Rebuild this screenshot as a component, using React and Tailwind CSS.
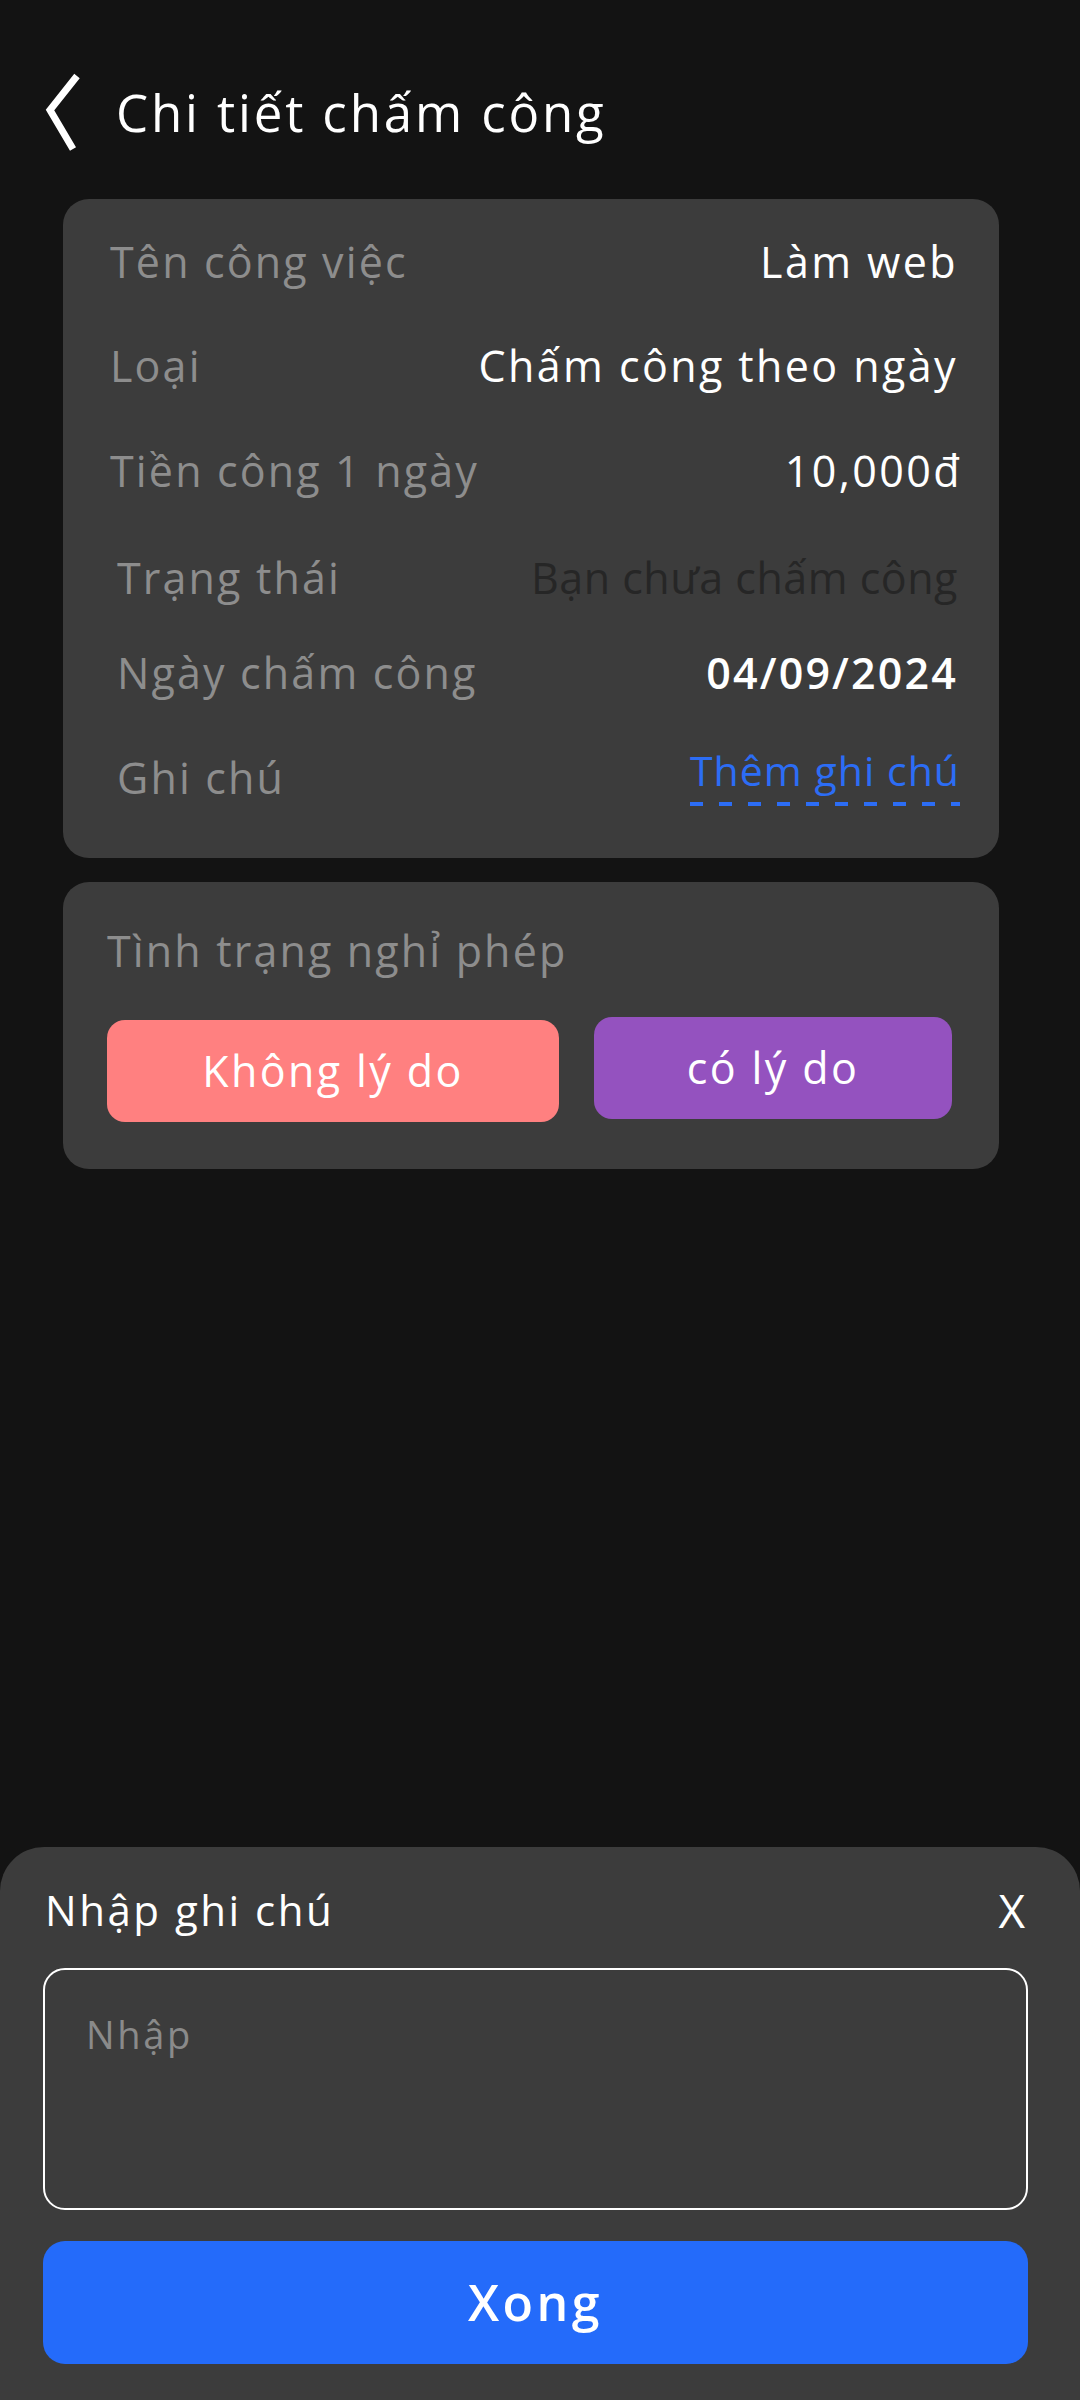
export default function App() {
  const label = "text-[43px] leading-[60px] tracking-[0.05em] text-[#8d8d8d]";
  const value = "text-[43px] leading-[60px] tracking-[0.056em] text-white font-medium";
  return (
    <div className="h-[2400px] w-[1080px] bg-[#131313] flex flex-col font-['Open_Sans','Noto_Sans',sans-serif] overflow-hidden">
      {/* Header */}
      <div className="flex items-center pt-[72px] pl-[45px]">
        <svg width="36" height="80" viewBox="0 0 36 80" className="shrink-0">
          <polyline points="32,4 5,38 28,77" fill="none" stroke="white" strokeWidth="7" strokeLinejoin="miter" />
        </svg>
        <div className="ml-[35px] text-[51px] leading-[70px] tracking-[0.056em] text-white">Chi tiết chấm công</div>
      </div>

      {/* Card 1 */}
      <div className="ml-[63px] mt-[47px] w-[936px] h-[659px] rounded-[26px] bg-[#3c3c3c] flex flex-col pt-[33px]">
        <div className="flex justify-between pl-[47px] pr-[41px]">
          <span className={label}>Tên công việc</span>
          <span className={value}>Làm web</span>
        </div>
        <div className="flex justify-between pl-[47px] pr-[41px] mt-[44px]">
          <span className={label}>Loại</span>
          <span className={value}>Chấm công theo ngày</span>
        </div>
        <div className="flex justify-between pl-[47px] pr-[37px] mt-[45px]">
          <span className={label}>Tiền công 1 ngày</span>
          <span className={value}>10,000đ</span>
        </div>
        <div className="flex justify-between pl-[54px] pr-[41px] mt-[47px]">
          <span className={label}>Trạng thái</span>
          <span className="text-[43px] leading-[60px] tracking-[0.012em] text-[#262626]">Bạn chưa chấm công</span>
        </div>
        <div className="flex justify-between pl-[54px] pr-[41px] mt-[35px]">
          <span className={label}>Ngày chấm công</span>
          <span className="text-[43px] leading-[60px] tracking-[0.05em] text-white font-semibold">04/09/2024</span>
        </div>
        <div className="flex justify-between items-start pl-[54px] pr-[39px] mt-[45px]">
          <span className={label}>Ghi chú</span>
          <div className="-mt-[7px] flex flex-col">
            <span className="text-[41px] leading-[58px] tracking-[0.025em] text-[#2c6df5]">Thêm ghi chú</span>
            <div className="mt-[3px] h-[4px] bg-[repeating-linear-gradient(90deg,#2c6df5_0px,#2c6df5_13px,transparent_13px,transparent_29px)]"></div>
          </div>
        </div>
      </div>

      {/* Card 2 */}
      <div className="ml-[63px] mt-[24px] w-[936px] h-[287px] rounded-[26px] bg-[#3c3c3c] flex flex-col pt-[39px] pl-[44px]">
        <div className={label}>Tình trạng nghỉ phép</div>
        <div className="flex items-start mt-[39px]">
          <div className="w-[452px] h-[102px] rounded-[18px] bg-[#ff8080] flex items-center justify-center text-white text-[43px] tracking-[0.056em] font-medium">
            Không lý do
          </div>
          <div className="ml-[35px] -mt-[3px] w-[358px] h-[102px] rounded-[18px] bg-[#9452bf] flex items-center justify-center text-white text-[43px] tracking-[0.056em] font-medium">
            có lý do
          </div>
        </div>
      </div>

      {/* Bottom sheet */}
      <div className="mt-auto h-[553px] rounded-t-[44px] bg-[#3c3c3c] flex flex-col pt-[35px] pl-[43px] pr-[52px]">
        <div className="flex justify-between items-center">
          <span className="text-[42px] leading-[56px] tracking-[0.06em] text-white pl-[2px]">Nhập ghi chú</span>
          <span className="text-[46px] leading-[56px] text-white font-medium pr-[3px]">X</span>
        </div>
        <div className="mt-[30px] h-[242px] rounded-[22px] border-[2.5px] border-white pt-[38px] pl-[41px]">
          <div className="text-[38px] leading-[52px] tracking-[0.07em] text-[#8a8a8a]">Nhập</div>
        </div>
        <div className="mt-[31px] h-[123px] rounded-[22px] bg-[#246bfa] flex items-center justify-center text-white text-[50px] tracking-[0.07em] font-semibold">
          Xong
        </div>
      </div>
    </div>
  );
}
